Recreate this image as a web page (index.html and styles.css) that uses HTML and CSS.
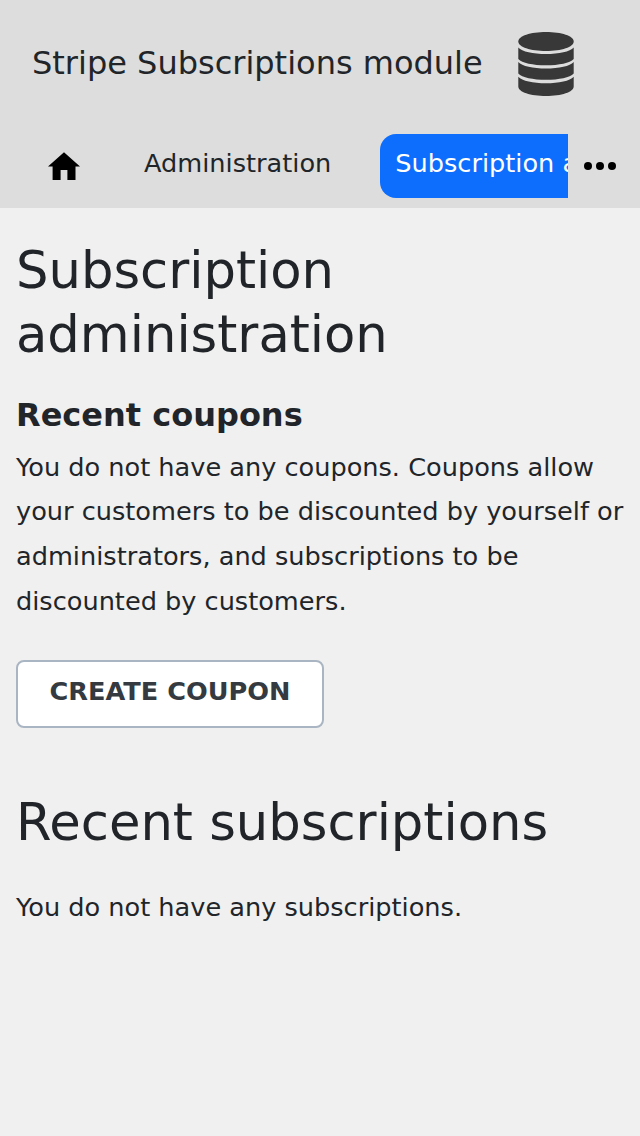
FILE: index.html
```
<!DOCTYPE html>
<html lang="en">
<head>
<meta charset="utf-8">
<title>Subscription administration</title>
<link rel="stylesheet" href="styles.css">
</head>
<body>
<header class="header">
  <div class="brand">
    <span class="brand-name">Stripe Subscriptions module</span>
    <svg class="brand-icon" viewBox="0 0 56 64" width="56" height="64" fill="#383838">
      <path d="M.3 9.500C.3 4 12.500 0 28 0s27.700 4 27.700 9.500S43.500 19 28 19 .3 15 .3 9.500z"/>
      <path d="M.3 15.500C4 19.800 15 22 28 22s24-2.200 27.700-6.500V27C52 31 41 33.300 28 33.300S4 31 .3 27z"/>
      <path d="M.3 30C4 34.300 15 36.500 28 36.500s24-2.200 27.700-6.500V41.500C52 45.500 41 47.800 28 47.800S4 45.500.3 41.500z"/>
      <path d="M.3 44.700C4 49 15 51.200 28 51.200s24-2.200 27.700-6.500V54.500C55.700 60 43.500 64 28 64S.3 60 .3 54.500z"/>
    </svg>
  </div>
  <nav class="nav">
    <a class="home"><svg viewBox="0 0 32 28" width="32" height="28"><path d="M16 .3L32 14.500H27.500V28H19.400V18H12.600V28H4.600V14.500H0z"/></svg></a>
    <div class="tabs">
      <a class="tab">Administration</a>
      <a class="tab tab-active">Subscription administration</a>
    </div>
    <a class="more"><svg viewBox="0 0 32 8" width="32" height="8"><circle cx="4" cy="4" r="4"/><circle cx="16" cy="4" r="4"/><circle cx="28" cy="4" r="4"/></svg></a>
  </nav>
</header>
<main class="content">
  <h1 class="title">Subscription administration</h1>
  <h2 class="subtitle">Recent coupons</h2>
  <p class="text">You do not have any coupons. Coupons allow your customers to be discounted by yourself or administrators, and subscriptions to be discounted by customers.</p>
  <a class="button">CREATE COUPON</a>
  <h1 class="title title-second">Recent subscriptions</h1>
  <p class="text">You do not have any subscriptions.</p>
</main>
</body>
</html>
```
FILE: styles.css
```
* { box-sizing: border-box; }
body { margin: 0; height: 1136px; overflow: hidden; background: #f0f0f0; color: #212529; font-family: "DejaVu Sans", sans-serif; font-size: 25.6px; }
.header { height: 208px; background: #ddd; }
.brand { display: flex; align-items: center; height: 128px; padding-left: 32px; }
.brand-name { width: 486px; padding-bottom: 2px; font-size: 32px; white-space: nowrap; }
.brand-icon { flex: none; }
.nav { display: flex; height: 80px; }
.home { display: flex; width: 128px; padding: 24px 0 0 48px; }
.tabs { display: flex; width: 440px; overflow: hidden; padding-top: 6px; gap: 34px; }
.tab { flex: none; height: 64px; padding: 0 15px 0 16px; line-height: 59px; white-space: nowrap; }
.tab-active { padding-left: 15px; background: #0d6efd; color: #fff; border-radius: 16px; }
.more { display: flex; width: 72px; padding: 34px 0 0 16px; }
.content { padding: 30px 16px 0; }
.title { margin: 0; font-size: 51.2px; font-weight: 400; line-height: 64px; }
.subtitle { margin: 27px 0 7.6px; font-size: 32px; line-height: 44px; }
.text { margin: 0; line-height: 44.8px; }
.button { display: block; width: 308px; height: 68px; margin: 36.2px 0 62px; border: 2px solid #a9b5c2; border-radius: 8px; background: #fff; color: #343a40; font-weight: 700; line-height: 59px; text-align: center; }
.title-second { margin-bottom: 31px; }
```
